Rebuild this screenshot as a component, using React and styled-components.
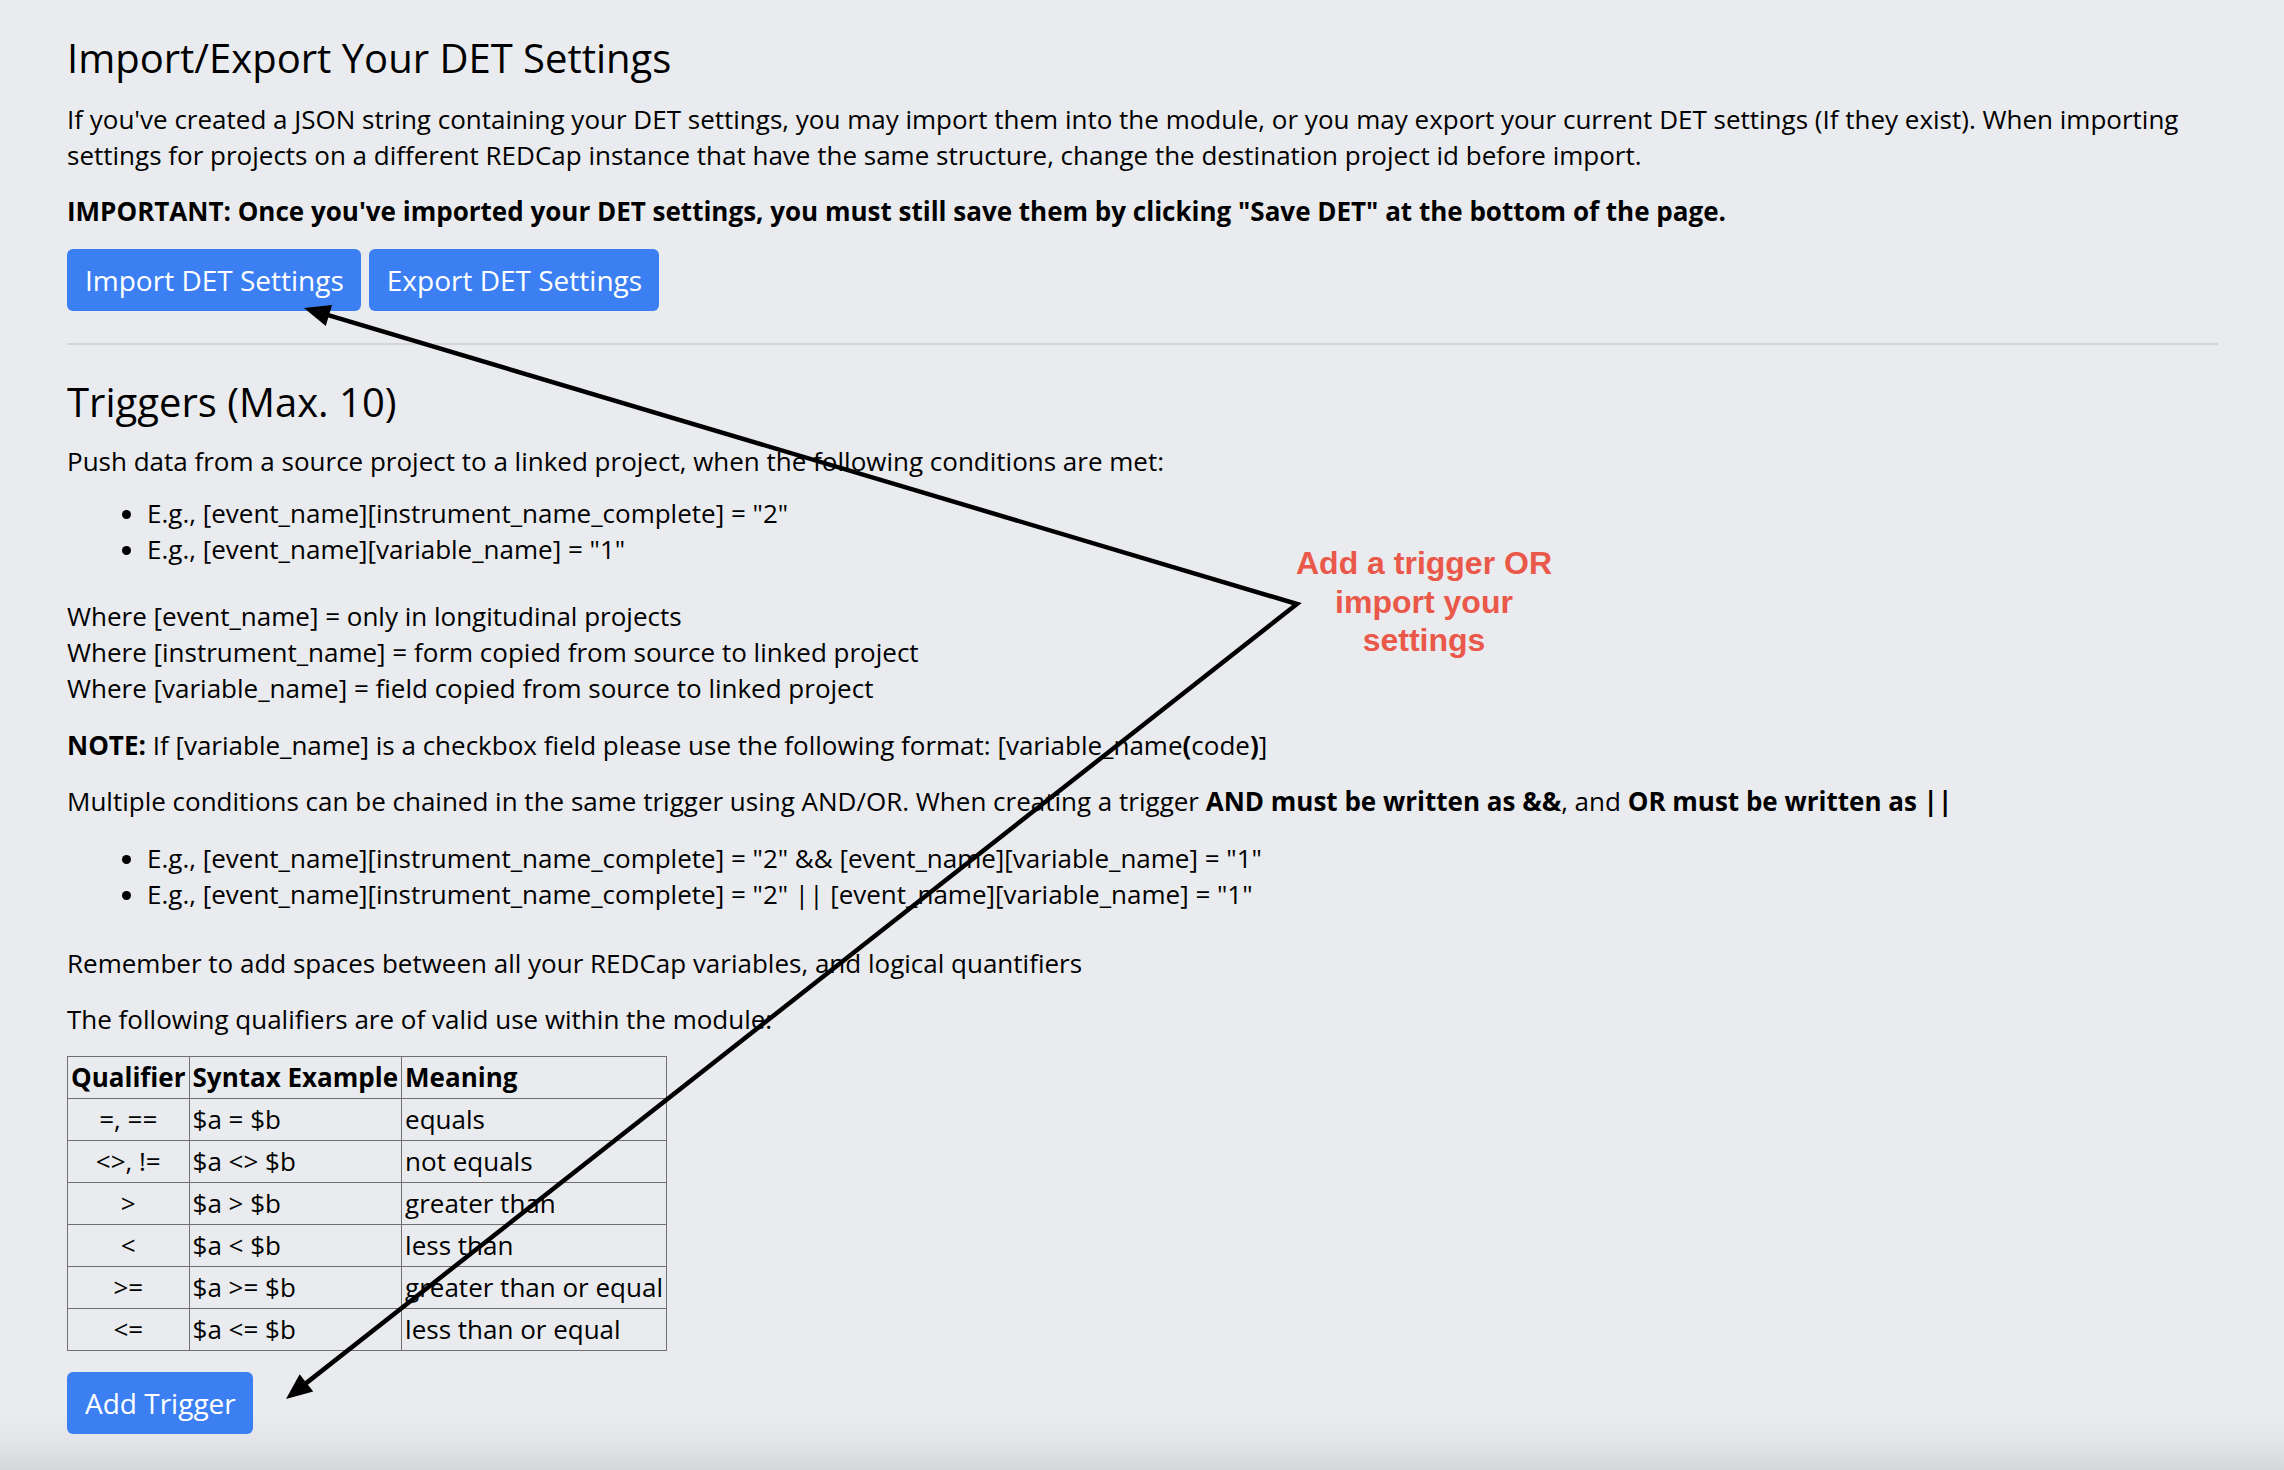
import React from "react";
import styled, { createGlobalStyle } from "styled-components";

const GlobalStyle = createGlobalStyle`
  html {
    min-height: 100%;
    background: linear-gradient(
      to bottom,
      #e9ebee 0,
      #e9ebee calc(100% - 58px),
      #e4e5e8 calc(100% - 30px),
      #d6d7d9 100%
    );
  }
  body {
    margin: 0;
    font-family: "Open Sans", "Noto Sans", sans-serif;
    font-size: 26px;
    line-height: 36px;
    color: #000;
  }
  * { box-sizing: border-box; }
`;

const Page = styled.div`
  position: relative;
  min-height: 1470px;
  padding: 34px 66px 0 67px;
`;

const Heading = styled.h4`
  margin: 0 0 ${(p) => p.$gap}px;
  font-size: 40px;
  line-height: 47px;
  font-weight: 400;
`;

const Para = styled.p`
  margin: 0 0 ${(p) => (p.$gap ?? 20)}px;
  font-weight: ${(p) => (p.$bold ? 700 : 400)};
`;

const ButtonRow = styled.div`
  display: flex;
  gap: 8px;
`;

const Button = styled.button`
  font-family: "Open Sans", "Noto Sans", sans-serif;
  font-size: 28px;
  line-height: 36px;
  color: #fff;
  background: #3b7ff3;
  border: none;
  border-radius: 6px;
  padding: 13px 17px 13px 18px;
  cursor: pointer;
`;

const Rule = styled.hr`
  margin: 32px 0 33px;
  border: none;
  height: 2px;
  background: #d3d5d9;
`;

const List = styled.ul`
  margin: ${(p) => p.$top}px 0 ${(p) => p.$bottom}px;
  padding-left: 80px;
`;

const Table = styled.table`
  border-collapse: collapse;
  margin: 19px 0 21px;
`;

const Th = styled.th`
  border: 1px solid #707070;
  padding: 3px 3px;
  line-height: 35px;
  text-align: left;
  font-weight: 700;
`;

const Td = styled.td`
  border: 1px solid #707070;
  padding: 3px 3px;
  line-height: 35px;
  text-align: ${(p) => (p.$center ? "center" : "left")};
  white-space: nowrap;
`;

const Overlay = styled.svg`
  position: absolute;
  left: 0;
  top: 0;
  pointer-events: none;
`;

const Callout = styled.div`
  position: absolute;
  left: 1274px;
  top: 544px;
  width: 300px;
  text-align: center;
  font-family: "Liberation Sans", Arial, sans-serif;
  font-weight: 700;
  font-size: 32px;
  line-height: 38.5px;
  color: #ea5849;
`;

const rows = [
  ["=, ==", "$a = $b", "equals"],
  ["<>, !=", "$a <> $b", "not equals"],
  [">", "$a > $b", "greater than"],
  ["<", "$a < $b", "less than"],
  [">=", "$a >= $b", "greater than or equal"],
  ["<=", "$a <= $b", "less than or equal"],
];

function Arrows() {
  const apex = [1297, 604];
  const t1 = [304, 308];
  const t2 = [286, 1399];
  const head = (tip) => {
    const dx = tip[0] - apex[0];
    const dy = tip[1] - apex[1];
    const len = Math.hypot(dx, dy);
    const ux = dx / len;
    const uy = dy / len;
    const bx = tip[0] - ux * 26;
    const by = tip[1] - uy * 26;
    const px = -uy * 11;
    const py = ux * 11;
    return {
      base: [tip[0] - ux * 20, tip[1] - uy * 20],
      pts: `${tip[0]},${tip[1]} ${bx + px},${by + py} ${bx - px},${by - py}`,
    };
  };
  const h1 = head(t1);
  const h2 = head(t2);
  return (
    <Overlay width="2284" height="1470" viewBox="0 0 2284 1470">
      <polyline
        points={`${h1.base[0]},${h1.base[1]} ${apex[0]},${apex[1]} ${h2.base[0]},${h2.base[1]}`}
        fill="none"
        stroke="#000"
        strokeWidth="4.5"
        strokeLinejoin="miter"
      />
      <polygon points={h1.pts} fill="#000" />
      <polygon points={h2.pts} fill="#000" />
    </Overlay>
  );
}

export default function App() {
  return (
    <>
      <GlobalStyle />
      <Page>
        <Heading $gap={20}>Import/Export Your DET Settings</Heading>
        <Para>
          If you've created a JSON string containing your DET settings, you may
          import them into the module, or you may export your current DET
          settings (If they exist). When importing settings for projects on a
          different REDCap instance that have the same structure, change the
          destination project id before import.
        </Para>
        <Para $bold>
          IMPORTANT: Once you've imported your DET settings, you must still save
          them by clicking "Save DET" at the bottom of the page.
        </Para>
        <ButtonRow>
          <Button>Import DET Settings</Button>
          <Button>Export DET Settings</Button>
        </ButtonRow>
        <Rule />
        <Heading $gap={18}>Triggers (Max. 10)</Heading>
        <Para $gap={0}>
          Push data from a source project to a linked project, when the
          following conditions are met:
        </Para>
        <List $top={16} $bottom={31}>
          <li>E.g., [event_name][instrument_name_complete] = "2"</li>
          <li>E.g., [event_name][variable_name] = "1"</li>
        </List>
        <Para $gap={21}>
          Where [event_name] = only in longitudinal projects
          <br />
          Where [instrument_name] = form copied from source to linked project
          <br />
          Where [variable_name] = field copied from source to linked project
        </Para>
        <Para>
          <b>NOTE:</b> If [variable_name] is a checkbox field please use the
          following format: [variable_name<b>(</b>code<b>)</b>]
        </Para>
        <Para $gap={0}>
          Multiple conditions can be chained in the same trigger using AND/OR.
          When creating a trigger <b>AND must be written as &amp;&amp;</b>, and{" "}
          <b>OR must be written as ||</b>
        </Para>
        <List $top={21} $bottom={33}>
          <li>
            E.g., [event_name][instrument_name_complete] = "2" &amp;&amp;
            [event_name][variable_name] = "1"
          </li>
          <li>
            E.g., [event_name][instrument_name_complete] = "2" ||
            [event_name][variable_name] = "1"
          </li>
        </List>
        <Para>
          Remember to add spaces between all your REDCap variables, and logical
          quantifiers
        </Para>
        <Para $gap={0}>
          The following qualifiers are of valid use within the module:
        </Para>
        <Table>
          <thead>
            <tr>
              <Th>Qualifier</Th>
              <Th>Syntax Example</Th>
              <Th>Meaning</Th>
            </tr>
          </thead>
          <tbody>
            {rows.map((r) => (
              <tr key={r[0]}>
                <Td $center>{r[0]}</Td>
                <Td>{r[1]}</Td>
                <Td>{r[2]}</Td>
              </tr>
            ))}
          </tbody>
        </Table>
        <Button>Add Trigger</Button>
        <Arrows />
        <Callout>
          Add a trigger OR
          <br />
          import your
          <br />
          settings
        </Callout>
      </Page>
    </>
  );
}
